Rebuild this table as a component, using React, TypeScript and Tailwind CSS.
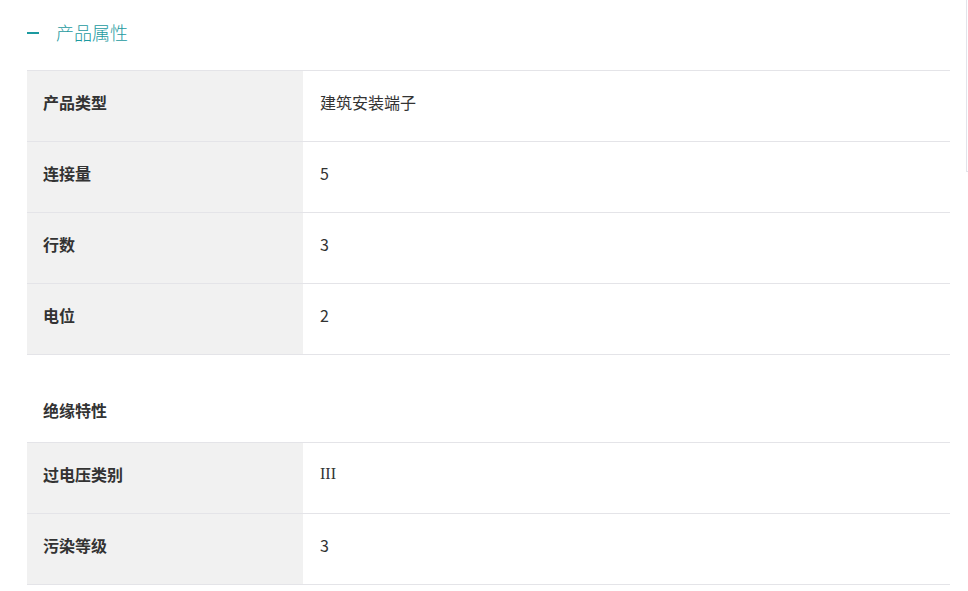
const font = { fontFamily: '"Noto Sans CJK SC", "Noto Sans", sans-serif' };

type Row = { label: string; value: React.ReactNode };

const general: Row[] = [
  { label: "产品类型", value: "建筑安装端子" },
  { label: "连接量", value: "5" },
  { label: "行数", value: "3" },
  { label: "电位", value: "2" },
];

const insulation: Row[] = [
  { label: "过电压类别", value: <span className="font-['Liberation_Serif',serif]">III</span> },
  { label: "污染等级", value: "3" },
];

function AttrTable({ rows }: { rows: Row[] }) {
  return (
    <div className="border-t border-[#e4e4e8]">
      {rows.map((r) => (
        <div key={r.label} className="flex h-[71px] border-b border-[#e4e4e8]">
          <div className="flex w-[276px] shrink-0 items-center bg-[#f1f1f1] pb-2 pl-4 text-base font-bold text-[#333]">
            {r.label}
          </div>
          <div className="flex flex-1 items-center pb-2 pl-[17px] text-base text-[#333]">{r.value}</div>
        </div>
      ))}
    </div>
  );
}

export default function App() {
  return (
    <div className="relative min-h-[591px] w-[968px] overflow-hidden bg-white" style={font}>
      {/* scroll track edge */}
      <div className="absolute left-[966px] top-[-1px] h-[173px] w-[4px] border-b border-l border-[#e3e3ea]" />

      <div className="pl-[27px] pr-[18px] pt-[20px]">
        <div className="flex h-6 items-center">
          <span className="mt-[2px] h-[2px] w-3 bg-[#1c9aa0]" />
          <span className="ml-[17px] text-lg font-light text-[#1c9aa0]">产品属性</span>
        </div>

        <div className="mt-[26px]">
          <AttrTable rows={general} />
        </div>

        <div className="flex h-[87px] items-end pb-[20px] pl-4 text-base font-bold text-[#333]">绝缘特性</div>

        <AttrTable rows={insulation} />
      </div>
    </div>
  );
}
